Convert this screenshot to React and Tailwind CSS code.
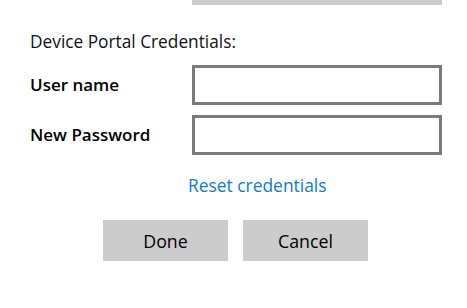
export default function App() {
  return (
    <div className="w-[467px] h-[308px] bg-white overflow-hidden" style={{ fontFamily: '"Open Sans", "Noto Sans", sans-serif' }}>
      <div className="ml-[192px] w-[250px] h-[5px] bg-[#cccccc]" />
      <div className="ml-[30px] mt-[25px] text-[17.3px] leading-[24px] text-[#111]">Device Portal Credentials:</div>
      <div className="flex items-center mt-[11px] h-[40px]">
        <div className="w-[192px] pl-[30px] text-[17px] leading-[24px] font-semibold text-black">User name</div>
        <input className="w-[250px] h-[40px] border-[3px] border-[#7a7a7a] bg-white outline-none" />
      </div>
      <div className="flex items-center mt-[10px] h-[40px]">
        <div className="w-[192px] pl-[30px] text-[17px] leading-[24px] font-semibold text-black">New Password</div>
        <input type="password" className="w-[250px] h-[40px] border-[3px] border-[#7a7a7a] bg-white outline-none" />
      </div>
      <div className="ml-[188px] mt-[18px] text-[17.4px] leading-[24px] text-[#0a7ad6]">Reset credentials</div>
      <div className="flex ml-[103px] mt-[23px] gap-[15px]">
        <button className="w-[125px] h-[41px] bg-[#cccccc] text-[17.8px] leading-[24px] text-black">Done</button>
        <button className="w-[125px] h-[41px] bg-[#cccccc] text-[17.8px] leading-[24px] text-black">Cancel</button>
      </div>
    </div>
  );
}
